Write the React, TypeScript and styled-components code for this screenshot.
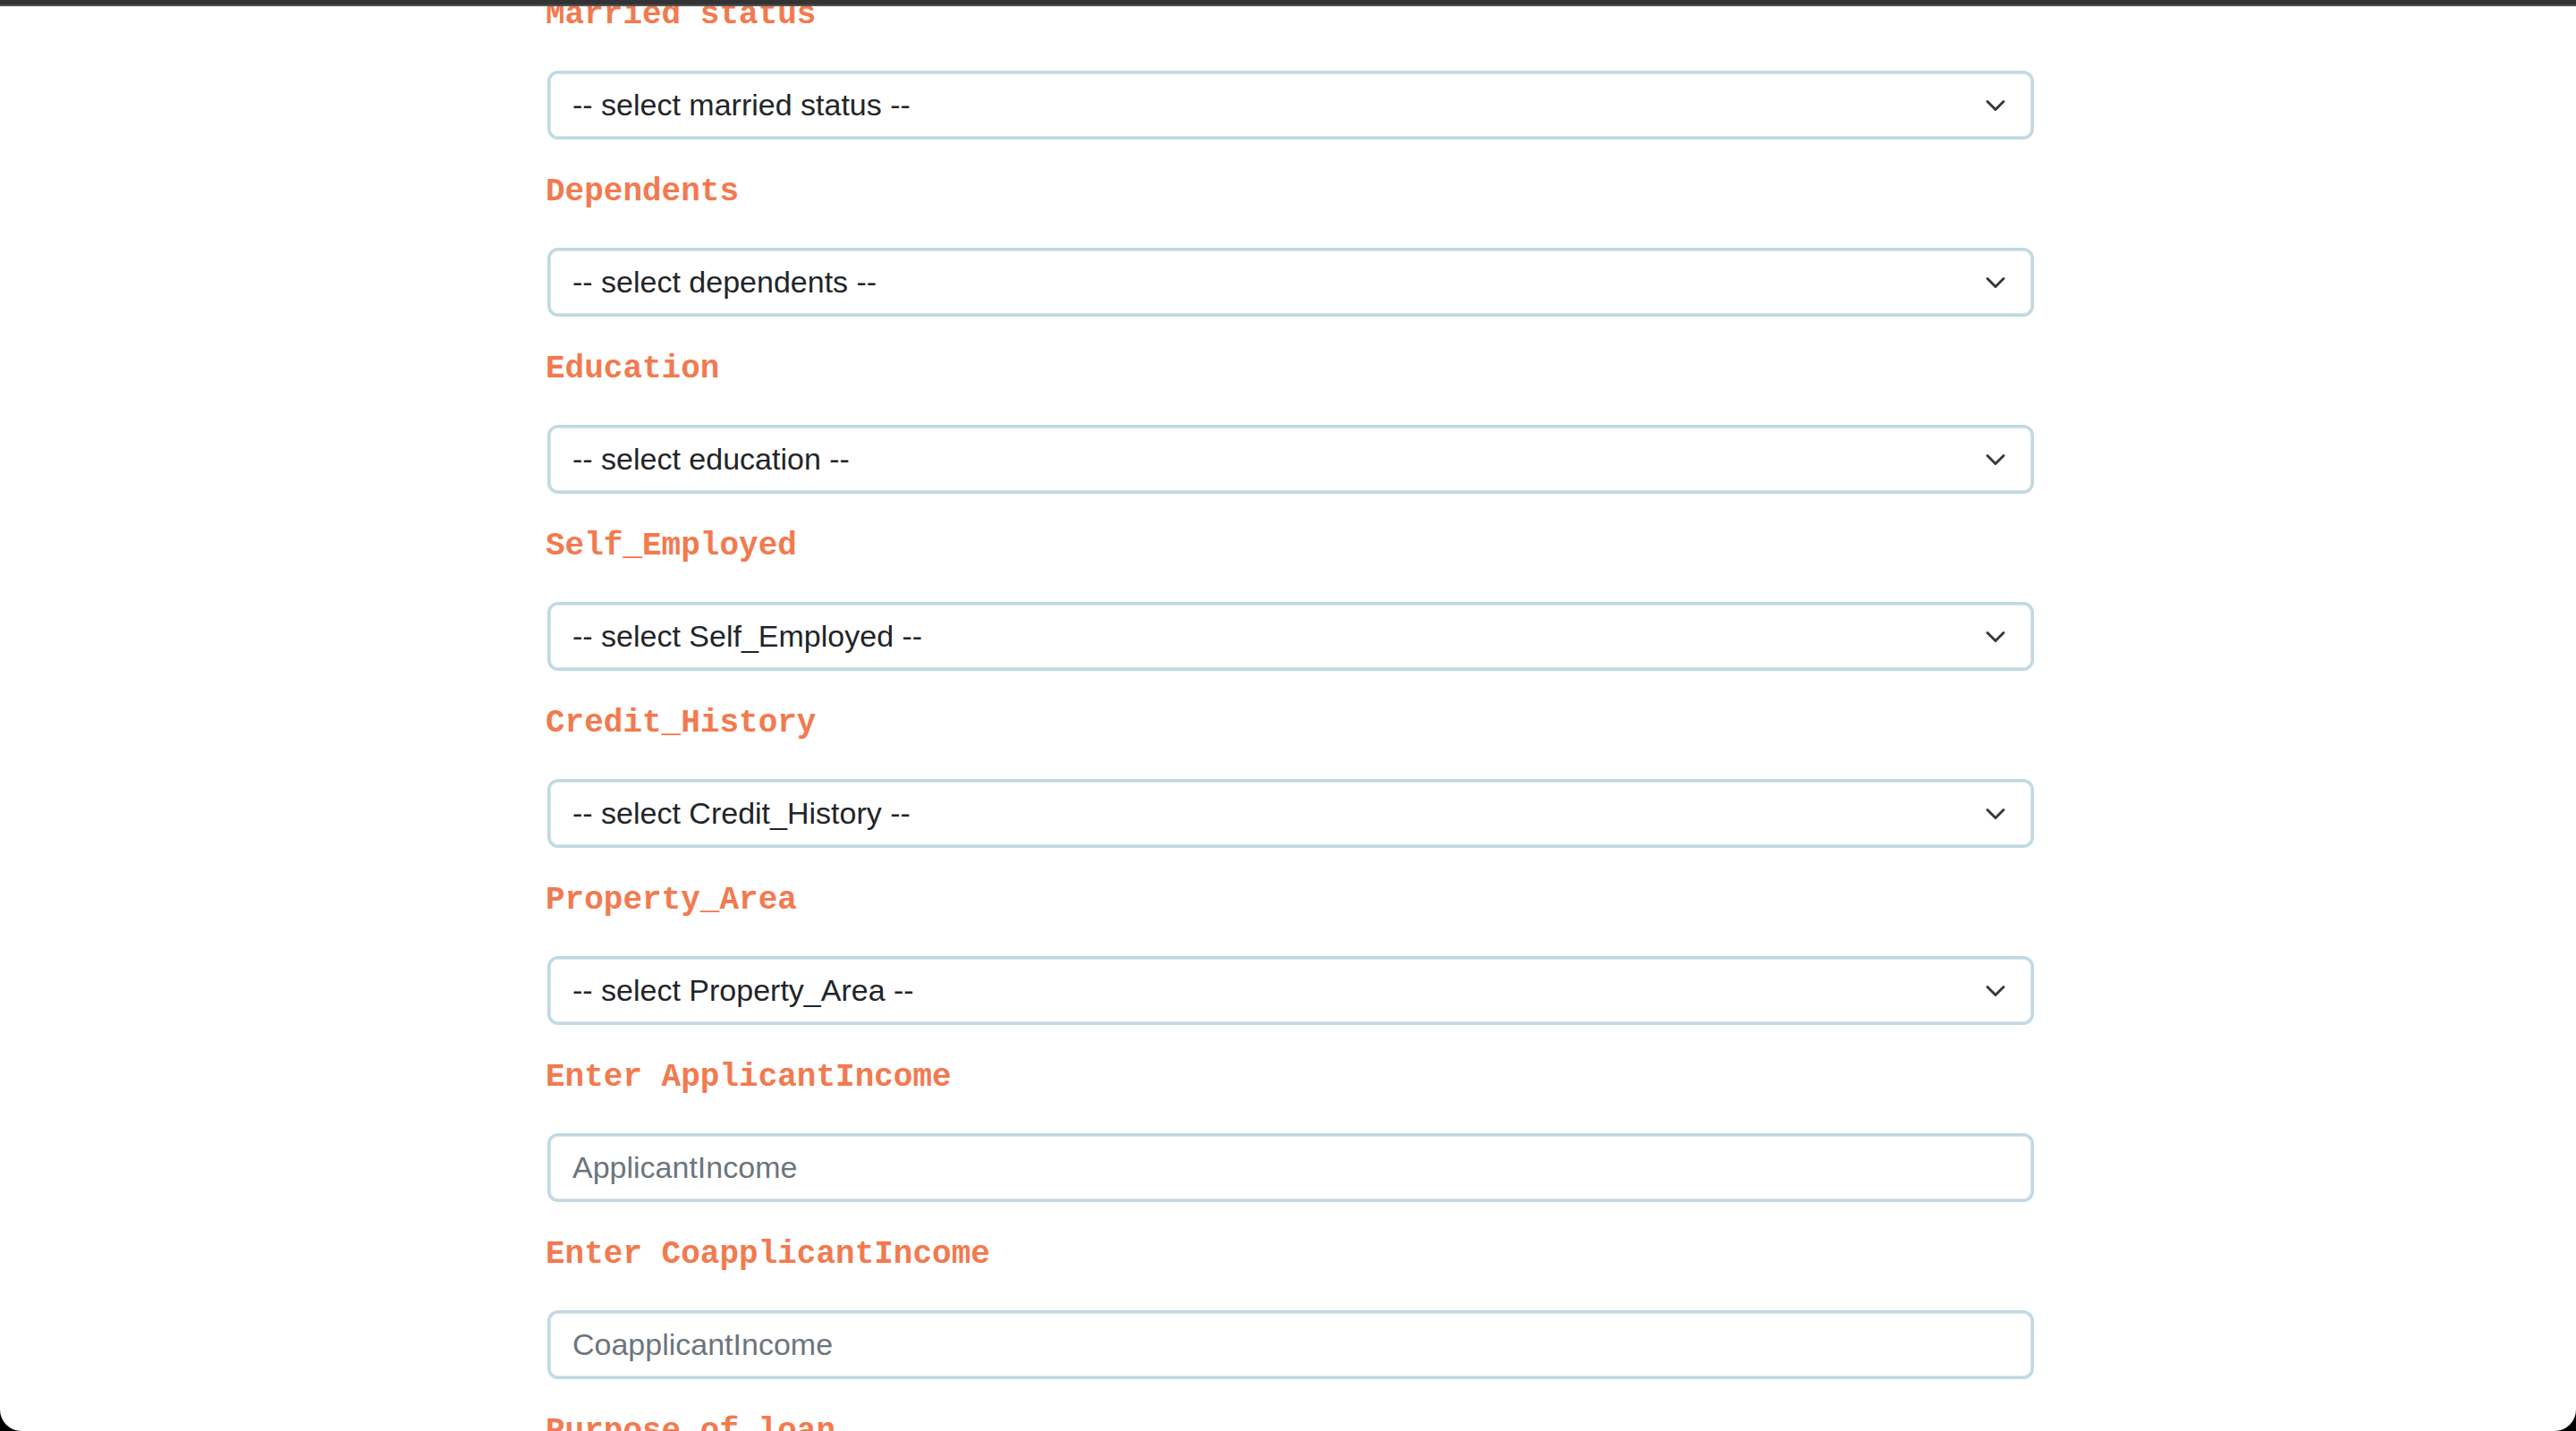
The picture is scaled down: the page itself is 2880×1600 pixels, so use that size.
import React from "react";
import styled, { createGlobalStyle } from "styled-components";

const GlobalStyle = createGlobalStyle`
  html, body {
    margin: 0;
    padding: 0;
    background: #000;
  }
  * { box-sizing: border-box; }
`;

const Window = styled.div`
  width: 2880px;
  height: 1600px;
  background: #000;
`;

const Screen = styled.div`
  width: 100%;
  height: 100%;
  background: #fff;
  border-radius: 0 0 24px 24px;
  overflow: hidden;
  display: flex;
  flex-direction: column;
`;

const TopBar = styled.div`
  flex: 0 0 auto;
  height: 7px;
  background: #333;
  border-bottom: 2px solid #4f4f4f;
`;

const Viewport = styled.div`
  flex: 1 1 auto;
  overflow: hidden;
`;

const Form = styled.form`
  width: 1662px;
  margin: -10px 0 0 612px;
  display: flex;
  flex-direction: column;
`;

const Field = styled.div`
  display: flex;
  flex-direction: column;
  padding-bottom: 39px;
`;

const Label = styled.label`
  display: block;
  font-family: "Courier New", "Nimbus Mono PS", "Nimbus Mono L", "Liberation Mono", monospace;
  font-weight: 700;
  font-size: 36px;
  line-height: 40px;
  color: #f27a4f;
  margin: 0 0 42px -2px;
`;

const controlBase = `
  width: 100%;
  height: 77px;
  border: 3px solid #bfd9e5;
  border-radius: 12px;
  background: #fff;
  font-family: "Liberation Sans", Arial, sans-serif;
  font-size: 34px;
  padding: 0 24px 0 25px;
  outline: none;
  box-shadow: inset 0 0 0 1px #dde3e6;
`;

const SelectBox = styled.div`
  ${controlBase}
  display: flex;
  align-items: center;
  justify-content: space-between;
  color: #212529;
  cursor: pointer;
`;

const Chevron = styled.svg`
  width: 24px;
  height: 24px;
  margin-right: 4px;
  flex: 0 0 auto;
`;

const TextInput = styled.input`
  ${controlBase}
  color: #212529;
  &::placeholder {
    color: #6c757d;
    opacity: 1;
  }
`;

const ChevronIcon = () => (
  <Chevron viewBox="0 0 16 16" aria-hidden="true">
    <path
      d="M2 5l6 6 6-6"
      fill="none"
      stroke="#343a40"
      strokeWidth="2"
      strokeLinecap="round"
      strokeLinejoin="round"
    />
  </Chevron>
);

type Item =
  | { kind: "select"; label: string; text: string }
  | { kind: "input"; label: string; placeholder: string };

const items: Item[] = [
  { kind: "select", label: "Married status", text: "-- select married status --" },
  { kind: "select", label: "Dependents", text: "-- select dependents --" },
  { kind: "select", label: "Education", text: "-- select education --" },
  { kind: "select", label: "Self_Employed", text: "-- select Self_Employed --" },
  { kind: "select", label: "Credit_History", text: "-- select Credit_History --" },
  { kind: "select", label: "Property_Area", text: "-- select Property_Area --" },
  { kind: "input", label: "Enter ApplicantIncome", placeholder: "ApplicantIncome" },
  { kind: "input", label: "Enter CoapplicantIncome", placeholder: "CoapplicantIncome" },
  { kind: "select", label: "Purpose of loan", text: "-- select purpose of loan --" },
];

export default function App() {
  return (
    <>
      <GlobalStyle />
      <Window>
        <Screen>
          <TopBar />
          <Viewport>
            <Form onSubmit={(e) => e.preventDefault()}>
              {items.map((it) => (
                <Field key={it.label}>
                  <Label>{it.label}</Label>
                  {it.kind === "select" ? (
                    <SelectBox role="combobox">
                      <span>{it.text}</span>
                      <ChevronIcon />
                    </SelectBox>
                  ) : (
                    <TextInput type="text" placeholder={it.placeholder} />
                  )}
                </Field>
              ))}
            </Form>
          </Viewport>
        </Screen>
      </Window>
    </>
  );
}
